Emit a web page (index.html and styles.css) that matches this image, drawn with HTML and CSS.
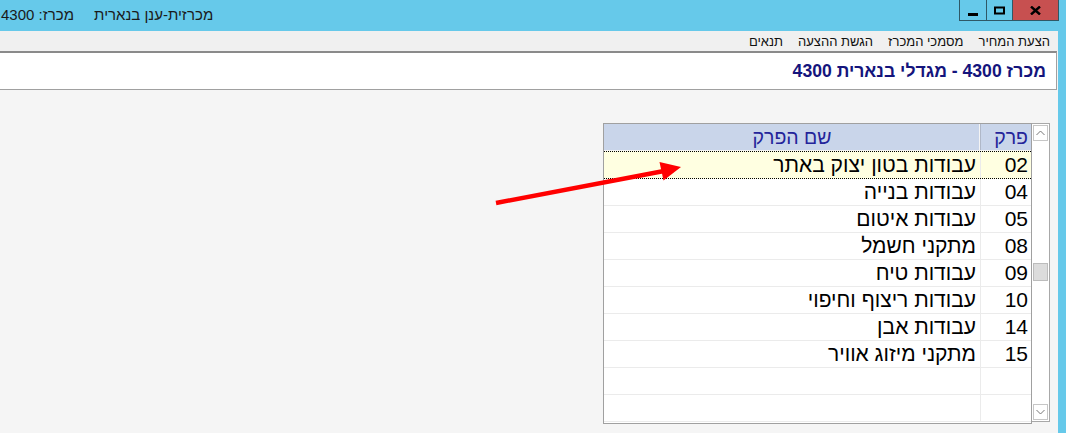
FILE: index.html
```html
<!DOCTYPE html>
<html lang="he">
<head>
    <meta charset="UTF-8">
    <title>מכרזית-ענן בנארית</title>
    <link rel="stylesheet" href="styles.css">
</head>
<body>
    <div class="window">
        <div class="titlebar">
            <div class="title" dir="rtl">
                <span>מכרזית-ענן בנארית</span>
                <span>מכרז: 4300</span>
            </div>
            <div class="caption">
                <div class="cap-btn cap-min">
                    <svg width="10" height="4" viewBox="0 0 10 4"><rect x="0" y="0" width="10" height="3" fill="#000"/></svg>
                </div>
                <div class="cap-btn cap-max">
                    <svg width="11" height="9" viewBox="0 0 11 9"><rect x="1" y="1.5" width="9" height="6" fill="none" stroke="#000" stroke-width="2"/></svg>
                </div>
                <div class="cap-btn cap-close">
                    <svg width="11" height="9" viewBox="0 0 11 9"><path d="M1 0.5 L10 8.5 M10 0.5 L1 8.5" stroke="#000" stroke-width="2.4"/></svg>
                </div>
            </div>
        </div>

        <div class="frame">
            <div class="client">
                <div class="menubar" dir="rtl">
                    <span>הצעת המחיר</span>
                    <span>מסמכי המכרז</span>
                    <span>הגשת ההצעה</span>
                    <span>תנאים</span>
                </div>

                <div class="tender-box" dir="rtl">מכרז 4300 - מגדלי בנארית 4300</div>

                <div class="workspace">
                    <div class="grid">
                        <div class="table" dir="rtl">
                            <div class="row head">
                                <div class="cell num">פרק</div>
                                <div class="cell name">שם הפרק</div>
                            </div>
                            <div class="row selected">
                                <div class="cell num">02</div>
                                <div class="cell name">עבודות בטון יצוק באתר</div>
                            </div>
                            <div class="row">
                                <div class="cell num">04</div>
                                <div class="cell name">עבודות בנייה</div>
                            </div>
                            <div class="row">
                                <div class="cell num">05</div>
                                <div class="cell name">עבודות איטום</div>
                            </div>
                            <div class="row">
                                <div class="cell num">08</div>
                                <div class="cell name">מתקני חשמל</div>
                            </div>
                            <div class="row">
                                <div class="cell num">09</div>
                                <div class="cell name">עבודות טיח</div>
                            </div>
                            <div class="row">
                                <div class="cell num">10</div>
                                <div class="cell name">עבודות ריצוף וחיפוי</div>
                            </div>
                            <div class="row">
                                <div class="cell num">14</div>
                                <div class="cell name">עבודות אבן</div>
                            </div>
                            <div class="row">
                                <div class="cell num">15</div>
                                <div class="cell name">מתקני מיזוג אוויר</div>
                            </div>
                            <div class="row">
                                <div class="cell num"></div>
                                <div class="cell name"></div>
                            </div>
                            <div class="row">
                                <div class="cell num"></div>
                                <div class="cell name"></div>
                            </div>
                        </div>

                        <div class="scrollbar">
                            <div class="sb-btn">
                                <svg width="9" height="6" viewBox="0 0 9 6"><path d="M0.5 5 L4.5 1 L8.5 5" fill="none" stroke="#777" stroke-width="1"/></svg>
                            </div>
                            <div class="sb-track">
                                <div class="sb-thumb"></div>
                            </div>
                            <div class="sb-btn">
                                <svg width="9" height="6" viewBox="0 0 9 6"><path d="M0.5 1 L4.5 5 L8.5 1" fill="none" stroke="#777" stroke-width="1"/></svg>
                            </div>
                        </div>
                    </div>
                </div>
            </div>
        </div>

        <!-- annotation arrow drawn over the screenshot -->
        <svg class="arrow" width="1066" height="433" viewBox="0 0 1066 433">
            <line x1="496" y1="203" x2="664" y2="171" stroke="#ff0000" stroke-width="4.5"/>
            <polygon points="659.5,162 681,167 663.5,180.5" fill="#ff0000"/>
        </svg>
    </div>
</body>
</html>
```

FILE: styles.css
```css
body {
    margin: 0;
    font-family: "Liberation Sans", "DejaVu Sans", Arial, sans-serif;
    background: #66c9ea;
    overflow: hidden;
}

.window {
    position: relative;
    width: 1066px;
    height: 433px;
    display: flex;
    flex-direction: column;
    background: #66c9ea;
}

/* title bar */
.titlebar {
    height: 31px;
    display: flex;
    justify-content: space-between;
    align-items: flex-start;
    flex-shrink: 0;
}

.title {
    display: flex;
    gap: 20px;
    padding-top: 6px;
    font-size: 15px;
    color: #1a1a1a;
    margin-left: 1px;
}

.caption {
    display: flex;
    margin-right: 7px;
    height: 21px;
    border: 1px solid #2f5866;
    border-top: none;
    box-sizing: border-box;
}

.cap-btn {
    display: flex;
    align-items: center;
    justify-content: center;
    height: 20px;
}

.cap-min {
    width: 27px;
    border-right: 1px solid #2f5866;
    align-items: flex-end;
    padding-bottom: 3px;
    box-sizing: border-box;
}

.cap-max {
    width: 25px;
    border-right: 1px solid #2f5866;
}

.cap-close {
    width: 45px;
    background: #c75050;
}

/* window body */
.frame {
    flex: 1;
    display: flex;
    padding-right: 8px;
    min-height: 0;
}

.client {
    flex: 1;
    display: flex;
    flex-direction: column;
    background: #f5f5f5;
}

.menubar {
    height: 20px;
    display: flex;
    gap: 15px;
    align-items: center;
    padding-right: 8px;
    font-size: 13px;
    color: #111;
    background: #f0f0f0;
    flex-shrink: 0;
}

.tender-box {
    height: 39px;
    box-sizing: border-box;
    background: #fff;
    border-top: 2px solid #8a8a8a;
    border-bottom: 1px solid #a0a0a0;
    border-right: 1px solid #a0a0a0;
    margin-right: 1px;
    padding-right: 10px;
    display: flex;
    align-items: center;
    font-size: 17.6px;
    font-weight: bold;
    color: #14147c;
    flex-shrink: 0;
}

.workspace {
    flex: 1;
    display: flex;
    justify-content: flex-end;
    padding-top: 33px;
    padding-right: 8px;
}

/* chapters grid */
.grid {
    width: 447px;
    height: 301px;
    display: flex;
    align-items: flex-start;
}

.table {
    flex: 1;
    height: 301px;
    box-sizing: border-box;
    border: 1px solid #a0a0a0;
    background: #fff;
}

.row {
    display: grid;
    grid-template-columns: 51px 1fr;
    height: 27px;
    box-sizing: border-box;
    border-bottom: 1px solid #ebebeb;
    font-size: 21px;
    color: #000;
}

.cell {
    display: flex;
    align-items: center;
    overflow: hidden;
    white-space: nowrap;
}

.cell.num {
    padding-right: 3px;
    border-left: 1px solid #ebebeb;
}

.cell.name {
    padding-right: 4px;
}

.row.head {
    background: #c9d5ea;
    border-bottom: 1px solid #f2f2f2;
    color: #24249a;
    font-size: 19.5px;
}

.row.head .cell.num {
    border-left: 1px solid #b0b8c8;
    box-shadow: -1px 0 0 #f4f4f4;
}

.row.head .cell.name {
    justify-content: center;
    padding-right: 0;
}

.row.selected {
    height: 28px;
    background: #ffffe1;
    border-top: 1px dotted #000;
    border-bottom: 1px dotted #000;
}

/* scrollbar */
.scrollbar {
    width: 18px;
    height: 299px;
    box-sizing: border-box;
    border: 1px solid #a8a8a8;
    border-left: none;
    background: #fff;
    display: flex;
    flex-direction: column;
    padding: 1px;
}

.sb-btn {
    height: 16px;
    box-sizing: border-box;
    border: 1px solid #c6c6c6;
    display: flex;
    align-items: center;
    justify-content: center;
    flex-shrink: 0;
}

.sb-track {
    flex: 1;
    padding-top: 122px;
}

.sb-thumb {
    height: 18px;
    box-sizing: border-box;
    background: #dcdcdc;
    border: 1px solid #bcbcbc;
}

.arrow {
    position: absolute;
    top: 0;
    left: 0;
    pointer-events: none;
}
```
